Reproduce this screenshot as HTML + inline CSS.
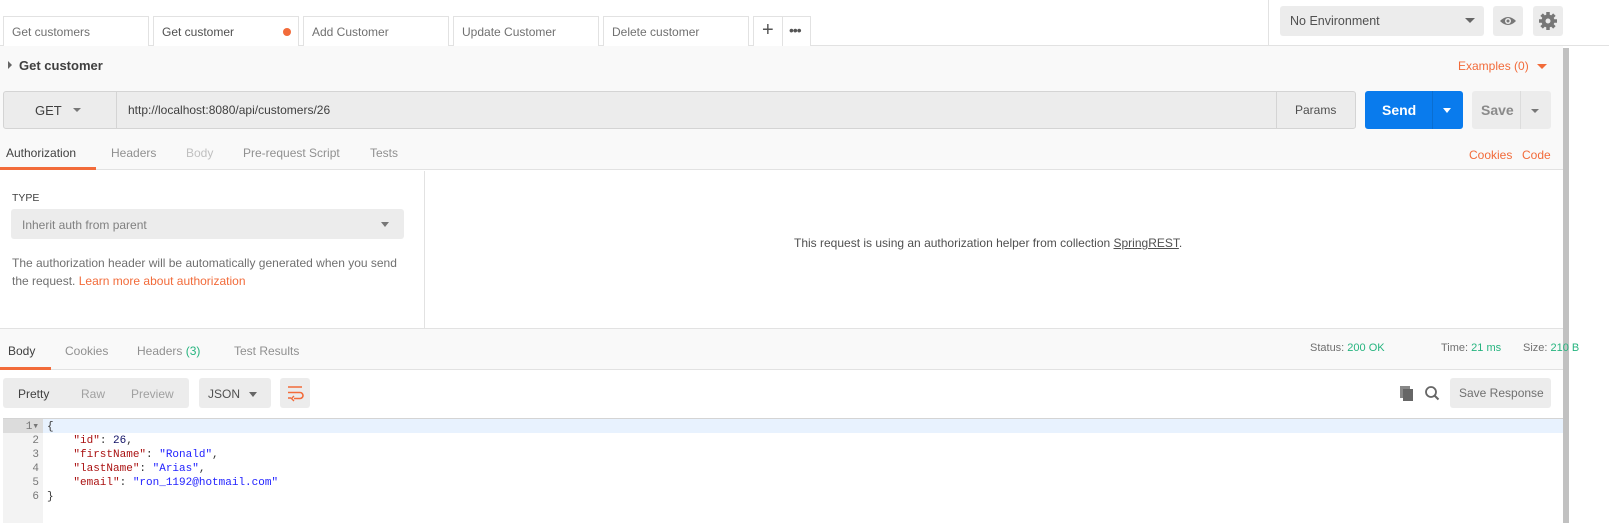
<!DOCTYPE html>
<html><head><meta charset="utf-8"><style>
*{box-sizing:border-box;margin:0;padding:0}
body{width:1609px;height:523px;overflow:hidden;background:#fff;font-family:"Liberation Sans",sans-serif;font-size:12px;color:#505050;position:relative;white-space:nowrap}
.a{position:absolute}
.tab{position:absolute;top:16px;height:30px;border:1px solid #e2e2e2;border-bottom:none;background:#fff;padding:8px 8px;font-size:12px;color:#707070}
.og{color:#f26b3a}
.gr{color:#26b47f}
.mono{font-family:"Liberation Mono",monospace;font-size:11px}
</style></head><body>
<div class="a" style="left:0;top:45px;width:1609px;height:1px;background:#e2e2e2"></div>
<div class="tab" style="left:3px;width:146px">Get customers</div>
<div class="tab" style="left:153px;width:146px;height:31px;color:#505050">Get customer<span class="a" style="left:129px;top:11px;width:8px;height:8px;border-radius:50%;background:#f26b3a"></span></div>
<div class="tab" style="left:303px;width:146px">Add Customer</div>
<div class="tab" style="left:453px;width:146px">Update Customer</div>
<div class="tab" style="left:603px;width:146px">Delete customer</div>
<div class="tab" style="left:753px;width:58px;padding:0"><span class="a" style="left:8px;top:2px;font-size:20px;color:#555">+</span><span class="a" style="left:28px;top:0;width:1px;height:30px;background:#e2e2e2"></span><span class="a" style="left:35px;top:5px;font-size:14px;color:#555;letter-spacing:-1px">•••</span></div>
<div class="a" style="left:1268px;top:0;width:1px;height:45px;background:#e2e2e2"></div>
<div class="a" style="left:1280px;top:6px;width:204px;height:30px;background:#ececec;border-radius:3px;padding:8px 10px;font-size:12.5px;color:#505050">No Environment<span class="a" style="left:185px;top:12px;border:5px solid transparent;border-top:5px solid #666;border-bottom:none"></span></div>
<div class="a" style="left:1493px;top:6px;width:30px;height:30px;background:#ececec;border-radius:3px"><svg width="30" height="30"><path d="M7 15 Q15 7 23 15 Q15 23 7 15Z" fill="#777"/><circle cx="15" cy="15" r="3" fill="#ececec"/><circle cx="15" cy="15" r="1.5" fill="#777"/></svg></div>
<div class="a" style="left:1533px;top:6px;width:30px;height:30px;background:#ececec;border-radius:3px"><svg width="30" height="30"><g stroke="#777" stroke-width="3.5"><path d="M15 6v18M6 15h18M8.6 8.6l12.8 12.8M21.4 8.6L8.6 21.4"/></g><circle cx="15" cy="15" r="6.5" fill="#777"/><circle cx="15" cy="15" r="2.5" fill="#ececec"/></svg></div>
<div class="a" style="left:0;top:46px;width:1563px;height:124px;background:#f9f9f9;border-bottom:1px solid #e2e2e2"></div>
<div class="a" style="left:1563px;top:48px;width:6px;height:475px;background:#c1c1c1"></div>
<div class="a" style="left:8px;top:61px;border:4px solid transparent;border-left:4px solid #666;border-right:none"></div>
<div class="a" style="left:19px;top:58px;font-size:13px;color:#404040;font-weight:bold">Get customer</div>
<div class="a og" style="left:1458px;top:59px;font-size:12px">Examples (0)</div>
<div class="a" style="left:1537px;top:64px;border:5px solid transparent;border-top:5px solid #f26b3a;border-bottom:none"></div>
<div class="a" style="left:3px;top:91px;width:1353px;height:38px;background:#ececec;border:1px solid #d4d4d4;border-radius:3px"></div>
<div class="a" style="left:116px;top:91px;width:1px;height:38px;background:#d4d4d4"></div>
<div class="a" style="left:1276px;top:91px;width:1px;height:38px;background:#d4d4d4"></div>
<div class="a" style="left:35px;top:103px;font-size:13px;color:#404040">GET</div>
<div class="a" style="left:73px;top:108px;border:4px solid transparent;border-top:4px solid #777;border-bottom:none"></div>
<div class="a" style="left:128px;top:103px;font-size:12px;color:#404040">http://localhost:8080/api/customers/26</div>
<div class="a" style="left:1295px;top:103px;font-size:12px;color:#505050">Params</div>
<div class="a" style="left:1365px;top:91px;width:98px;height:38px;background:#097bed;border-radius:3px"></div>
<div class="a" style="left:1432px;top:91px;width:1px;height:38px;background:#0a6ed0"></div>
<div class="a" style="left:1382px;top:102px;font-size:14px;font-weight:bold;color:#fff">Send</div>
<div class="a" style="left:1443px;top:108px;border:4px solid transparent;border-top:5px solid #fff;border-bottom:none"></div>
<div class="a" style="left:1472px;top:91px;width:79px;height:38px;background:#ececec;border-radius:3px"></div>
<div class="a" style="left:1520px;top:91px;width:1px;height:38px;background:#dcdcdc"></div>
<div class="a" style="left:1481px;top:102px;font-size:14px;font-weight:bold;color:#8a8a8a">Save</div>
<div class="a" style="left:1531px;top:109px;border:4px solid transparent;border-top:4px solid #777;border-bottom:none"></div>
<div class="a" style="left:6px;top:146px;font-size:12px;color:#404040">Authorization</div>
<div class="a" style="left:0;top:167px;width:96px;height:3px;background:#f26b3a"></div>
<div class="a" style="left:111px;top:146px;font-size:12px;color:#909090">Headers</div>
<div class="a" style="left:186px;top:146px;font-size:12px;color:#c0c0c0">Body</div>
<div class="a" style="left:243px;top:146px;font-size:12px;color:#909090">Pre-request Script</div>
<div class="a" style="left:370px;top:146px;font-size:12px;color:#909090">Tests</div>
<div class="a og" style="left:1469px;top:148px;font-size:12px">Cookies</div>
<div class="a og" style="left:1522px;top:148px;font-size:12px">Code</div>
<div class="a" style="left:424px;top:171px;width:1px;height:157px;background:#e2e2e2"></div>
<div class="a" style="left:12px;top:192px;font-size:10.5px;color:#404040">TYPE</div>
<div class="a" style="left:11px;top:209px;width:393px;height:30px;background:#ececec;border-radius:3px;padding:9px 11px;font-size:12px;color:#808080">Inherit auth from parent<span class="a" style="left:370px;top:13px;border:4px solid transparent;border-top:5px solid #777;border-bottom:none"></span></div>
<div class="a" style="left:12px;top:254px;font-size:12px;line-height:18px;color:#707070;width:400px;white-space:normal">The authorization header will be automatically generated when you send the request. <span class="og">Learn more about authorization</span></div>
<div class="a" style="left:794px;top:236px;font-size:12px;color:#505050">This request is using an authorization helper from collection <u>SpringREST</u>.</div>
<div class="a" style="left:0;top:328px;width:1563px;height:1px;background:#e2e2e2"></div>
<div class="a" style="left:0;top:329px;width:1563px;height:41px;background:#f9f9f9;border-bottom:1px solid #e2e2e2"></div>
<div class="a" style="left:8px;top:344px;font-size:12px;color:#404040">Body</div>
<div class="a" style="left:0;top:367px;width:51px;height:3px;background:#f26b3a"></div>
<div class="a" style="left:65px;top:344px;font-size:12px;color:#909090">Cookies</div>
<div class="a" style="left:137px;top:344px;font-size:12px;color:#909090">Headers <span class="gr">(3)</span></div>
<div class="a" style="left:234px;top:344px;font-size:12px;color:#909090">Test Results</div>
<div class="a" style="left:1310px;top:342px;font-size:11px;color:#707070">Status: <span class="gr">200 OK</span></div>
<div class="a" style="left:1441px;top:342px;font-size:11px;color:#707070">Time: <span class="gr">21 ms</span></div>
<div class="a" style="left:1523px;top:342px;font-size:11px;color:#707070">Size: <span class="gr">210 B</span></div>
<div class="a" style="left:3px;top:378px;width:186px;height:30px;background:#ececec;border-radius:3px"></div>
<div class="a" style="left:18px;top:387px;font-size:12px;color:#404040">Pretty</div>
<div class="a" style="left:81px;top:387px;font-size:12px;color:#a0a0a0">Raw</div>
<div class="a" style="left:131px;top:387px;font-size:12px;color:#a0a0a0">Preview</div>
<div class="a" style="left:199px;top:378px;width:72px;height:30px;background:#ececec;border-radius:3px"></div>
<div class="a" style="left:208px;top:387px;font-size:12px;color:#505050">JSON</div>
<div class="a" style="left:249px;top:392px;border:4px solid transparent;border-top:5px solid #666;border-bottom:none"></div>
<div class="a" style="left:280px;top:378px;width:30px;height:30px;background:#ececec;border-radius:3px"><svg width="30" height="30"><path d="M8 9h14M8 14.5h12a3 3 0 0 1 0 6h-6M8 20h3" stroke="#f26b3a" stroke-width="1.6" fill="none"/><path d="M14 18l-2.5 2.5 2.5 2.5" stroke="#f26b3a" stroke-width="1.4" fill="none"/></svg></div>
<div class="a" style="left:1400px;top:386px;width:10px;height:12px;background:#888"></div>
<div class="a" style="left:1403px;top:389px;width:10px;height:12px;background:#666"></div>
<svg class="a" style="left:1424px;top:385px" width="16" height="16"><circle cx="7" cy="7" r="5" stroke="#666" stroke-width="1.8" fill="none"/><path d="M10.5 10.5l4 4" stroke="#666" stroke-width="2"/></svg>
<div class="a" style="left:1450px;top:378px;width:101px;height:30px;background:#ececec;border-radius:3px;padding:8px 9px;font-size:12px;color:#707070">Save Response</div>
<div class="a" style="left:3px;top:418px;width:1560px;height:105px;border-top:1px solid #d4d4d4"></div>
<div class="a" style="left:3px;top:419px;width:40px;height:104px;background:#f3f3f3"></div>
<div class="a" style="left:3px;top:419px;width:40px;height:14px;background:#dcdcdc"></div>
<div class="a" style="left:43px;top:419px;width:1520px;height:14px;background:#e8f2fe"></div>
<div class="a mono" style="left:3px;top:420px;width:36px;text-align:right;line-height:14px;color:#777">1▾<br>2<br>3<br>4<br>5<br>6</div>
<pre class="a mono" style="left:47px;top:420px;line-height:14px;color:#333">{
    <span style="color:#a11">"id"</span>: <span style="color:#116">26</span>,
    <span style="color:#a11">"firstName"</span>: <span style="color:#22f">"Ronald"</span>,
    <span style="color:#a11">"lastName"</span>: <span style="color:#22f">"Arias"</span>,
    <span style="color:#a11">"email"</span>: <span style="color:#22f">"ron_1192@hotmail.com"</span>
}</pre>
</body></html>
